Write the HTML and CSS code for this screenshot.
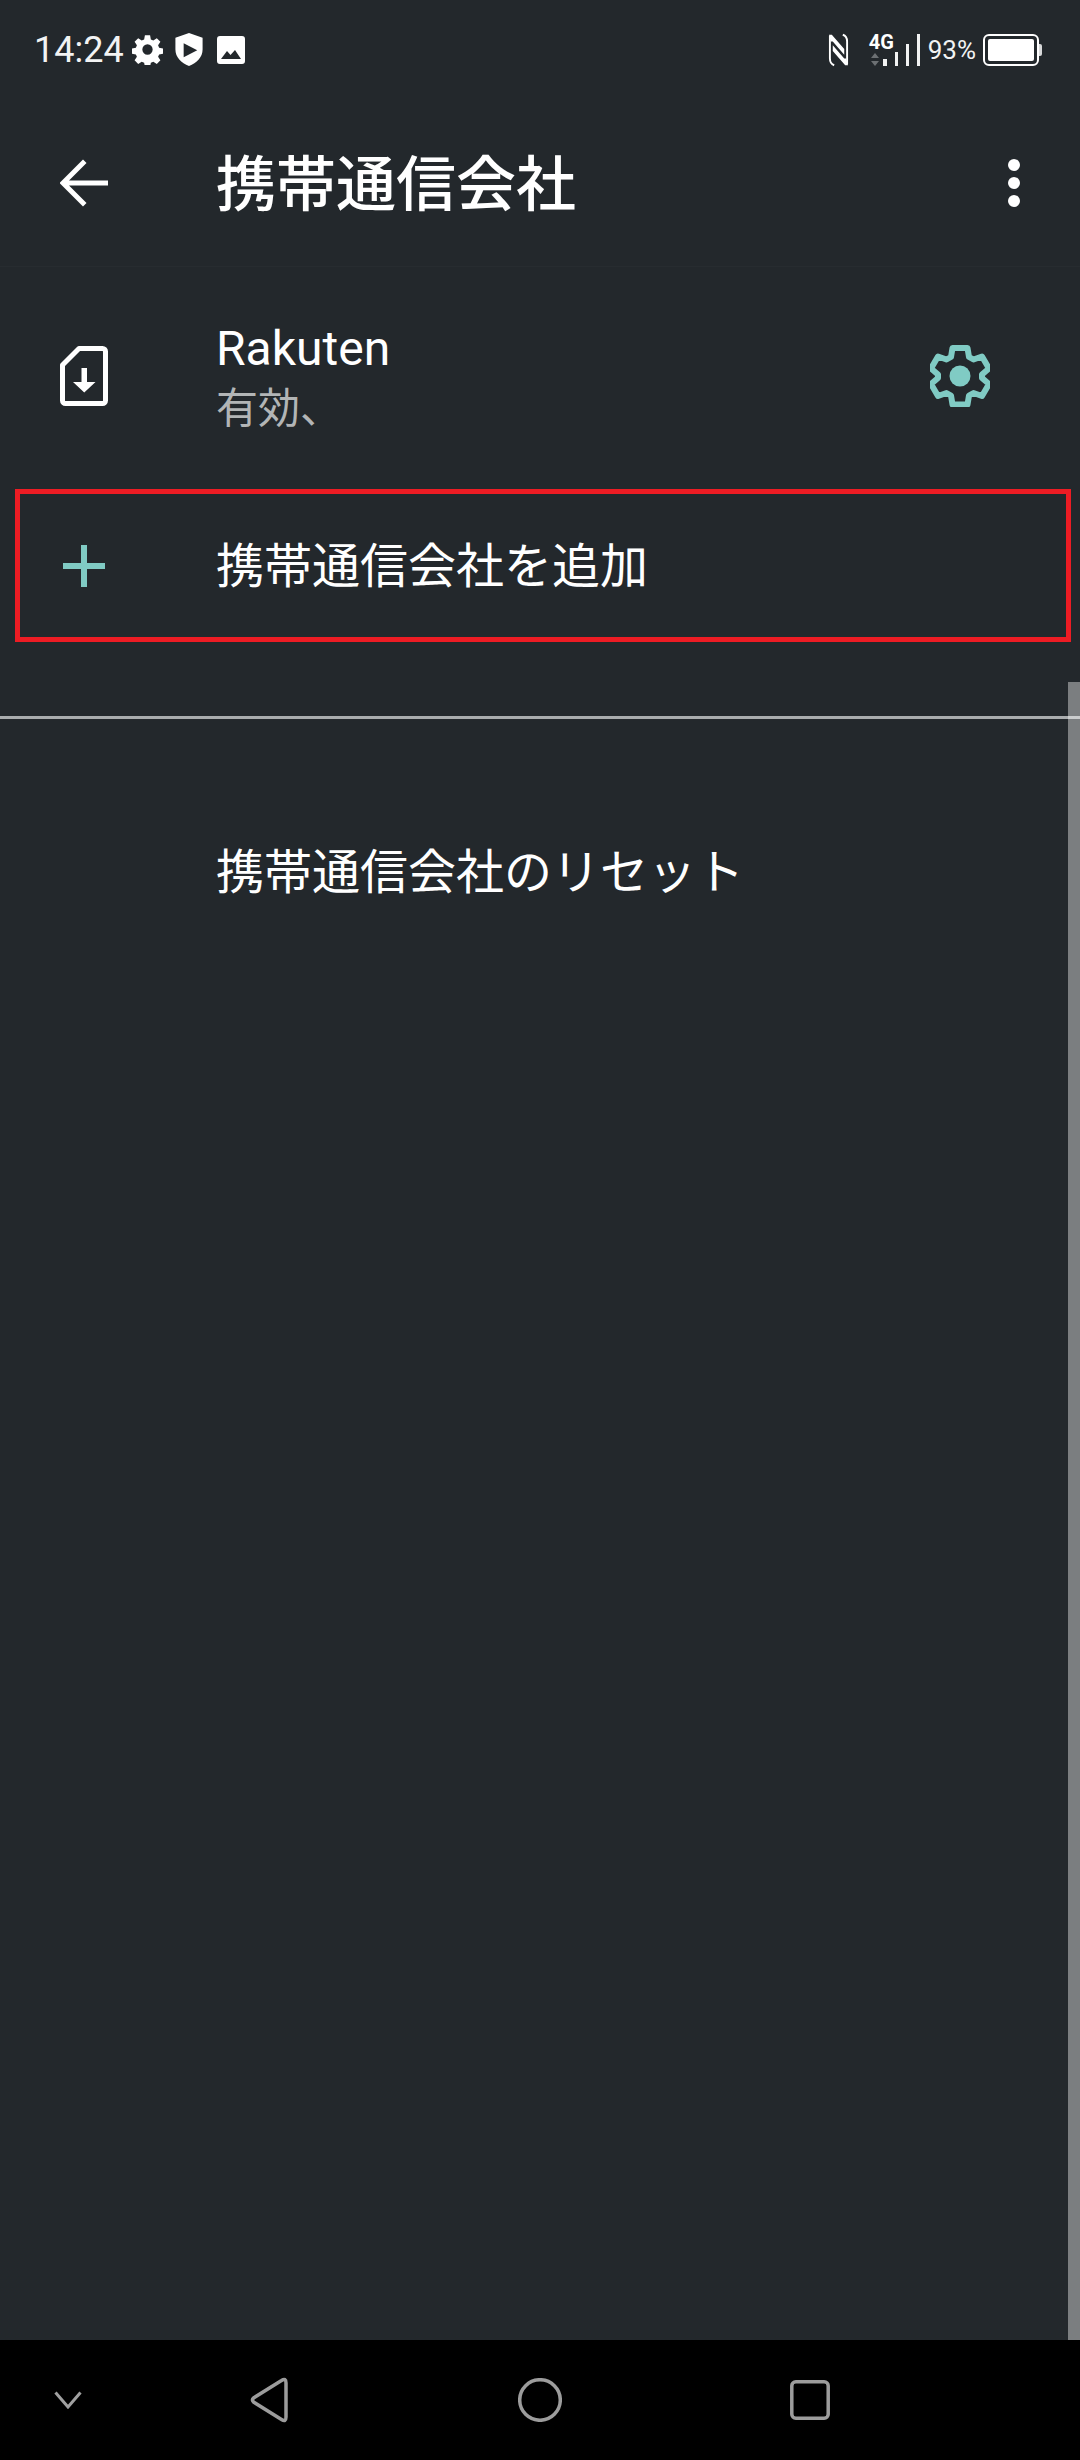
FILE: index.html
```html
<!DOCTYPE html>
<html lang="ja">
<head>
    <meta charset="UTF-8">
    <meta name="viewport" content="width=device-width, initial-scale=1.0">
    <title>携帯通信会社</title>
    <link rel="stylesheet" href="styles.css">
</head>
<body>
    <div class="screen">
        <div class="status-bar">
            <div class="status-left">
                <span class="time">14:24</span>
                <svg class="st-gear" viewBox="0 0 24 24"><path fill="#fff" fill-rule="evenodd" d="M10 1h4l.6 3.2 1.9.8 2.7-1.8 2.8 2.8-1.8 2.7.8 1.9 3 .6v4l-3 .6-.8 1.9 1.8 2.7-2.8 2.8-2.7-1.8-1.9.8-.6 3.2h-4l-.6-3.2-1.9-.8-2.7 1.8-2.8-2.8 1.8-2.7-.8-1.9-3-.6v-4l3-.6.8-1.9L2 6l2.800-2.800 2.700 1.800 1.900-.8zM12 8a4 4 0 1 0 0 8 4 4 0 0 0 0-8z"/></svg>
                <svg class="st-shield" viewBox="0 0 28 34"><path fill="#fff" fill-rule="evenodd" d="M14 0 28 5v12c0 8-6 14-14 17C6 31 0 25 0 17V5zM8.500 10.500v14.500l14-7.250z"/></svg>
                <svg class="st-image" viewBox="0 0 28 28"><path fill="#fff" fill-rule="evenodd" d="M3 0h22a3 3 0 0 1 3 3v22a3 3 0 0 1-3 3H3a3 3 0 0 1-3-3V3a3 3 0 0 1 3-3zM4 23h20l-6-9-4.500 5-3.500-4z"/></svg>
            </div>
            <div class="status-right">
                <svg class="st-nfc" viewBox="0 0 22 34"><path fill="none" stroke="#fff" stroke-width="2" d="M2 2V26c0 4 1.500 6 4.500 7"/><path fill="#fff" d="M1 1h3l13 15v6L5 8H3zM21 33h-3L5 18v-6l12 14h2z"/><path fill="none" stroke="#fff" stroke-width="2" d="M20 32V8c0-4-1.500-6-4.500-7"/></svg>
                <div class="net">
                    <span class="net-type">4G</span>
                    <svg class="net-arrows" viewBox="0 0 8 13"><path fill="#6c7073" d="M4 0 8 5H0zM0 8h8l-4 5z"/></svg>
                </div>
                <div class="signal">
                    <i class="bar bar1"></i><i class="bar bar2"></i><i class="bar bar3"></i><i class="bar bar4"></i>
                </div>
                <span class="battery-pct">93%</span>
                <div class="battery"><div class="battery-fill"></div></div>
                <div class="battery-tip"></div>
            </div>
        </div>

        <div class="app-bar">
            <svg class="icon-slot back" viewBox="0 0 48 48"><path fill="none" stroke="#fff" stroke-width="5" stroke-linecap="square" d="M47 24H5M23 4 3 24l20 20" stroke-linejoin="miter"/></svg>
            <h1 class="title">携帯通信会社</h1>
            <div class="overflow"><i></i><i></i><i></i></div>
        </div>

        <div class="list">
            <div class="row row-sim">
                <svg class="icon-slot" viewBox="0 0 48 60"><path fill="none" stroke="#fff" stroke-width="5" stroke-linejoin="round" d="M19 2.500h23.500a3 3 0 0 1 3 3v49a3 3 0 0 1-3 3h-37a3 3 0 0 1-3-3V19z"/><path fill="#fff" d="M21.500 22h5.500v14h8.500L24.250 46.500 13 36h8.500z"/></svg>
                <div class="sim-text">
                    <div class="sim-name">Rakuten</div>
                    <div class="sim-state">有効、</div>
                </div>
                <svg class="gear" viewBox="0 0 60 62"><g fill="none" stroke="#80cbc4" stroke-width="6" stroke-linejoin="round"><path d="M22.500 3h15l1.500 9 4.500 2.500 8.500-3 7 12-7 6v3.500l7 6-7 12-8.500-3-4.500 2.500-1.500 9h-15l-1.500-9-4.500-2.500-8.500 3-7-12 7-6v-3.500l-7-6 7-12 8.500 3 4.500-2.500z"/></g><circle cx="30" cy="31" r="10.500" fill="#80cbc4"/></svg>
            </div>
            <div class="row row-add">
                <svg class="icon-slot plus" viewBox="0 0 42 42"><path fill="#80cbc4" d="M18 0h6v18h18v6H24v18h-6V24H0v-6h18z"/></svg>
                <span class="row-label">携帯通信会社を追加</span>
            </div>
            <div class="divider"></div>
            <div class="row row-reset">
                <span class="row-label">携帯通信会社のリセット</span>
            </div>
        </div>

        <div class="scrollbar"></div>

        <div class="nav-bar">
            <svg class="nav-hide" viewBox="0 0 28 18"><path fill="none" stroke="#a0a0a0" stroke-width="3" d="M1.500 1.500 14 16 26.500 1.500"/></svg>
            <svg class="nav-back" viewBox="0 0 38 46"><path fill="none" stroke="#9c9c9c" stroke-width="3.500" stroke-linejoin="round" d="M31.500 3.500Q36 0.500 36 6V40Q36 45.500 31.500 42.500L3.500 25Q1.500 23 3.500 21Z"/></svg>
            <svg class="nav-home" viewBox="0 0 44 44"><circle cx="22" cy="22" r="20.300" fill="none" stroke="#9c9c9c" stroke-width="3.500"/></svg>
            <svg class="nav-recent" viewBox="0 0 40 40"><rect x="1.800" y="1.800" width="36.400" height="36.400" rx="4" fill="none" stroke="#9c9c9c" stroke-width="3.500"/></svg>
        </div>
    </div>
</body>
</html>
```

FILE: styles.css
```css
* {
    box-sizing: border-box;
}
html, body {
    margin: 0;
    padding: 0;
}
body {
    background: #23282c;
    font-family: "Noto Sans CJK JP", Roboto, sans-serif;
    color: #fff;
}
.screen {
    position: relative;
    width: 1080px;
    height: 2460px;
    display: flex;
    flex-direction: column;
    overflow: hidden;
}

/* status bar */
.status-bar {
    height: 99px;
    display: flex;
    justify-content: space-between;
    align-items: center;
    padding: 0 38px 0 34px;
}
.status-left, .status-right {
    display: flex;
    align-items: center;
}
.time {
    font-family: Roboto, sans-serif;
    font-size: 36px;
    line-height: 40px;
    color: #f2f3f3;
}
.st-gear {
    width: 31px;
    height: 31px;
    margin-left: 8px;
}
.st-shield {
    width: 28px;
    height: 33px;
    margin-left: 12px;
}
.st-image {
    width: 28px;
    height: 28px;
    margin-left: 14px;
}
.st-nfc {
    width: 21px;
    height: 34px;
}
.net {
    width: 28px;
    margin-left: 20px;
    display: flex;
    flex-direction: column;
    align-items: flex-start;
}
.net-type {
    font-family: Roboto, sans-serif;
    font-weight: 700;
    font-size: 20px;
    line-height: 16px;
}
.net-arrows {
    width: 8px;
    height: 13px;
    margin: 3px 0 0 2px;
}
.signal {
    display: flex;
    align-items: flex-end;
    gap: 8px;
    height: 32px;
    margin-left: -14px;
}
.bar {
    display: block;
    width: 3px;
    background: #f2f3f3;
}
.bar1 { height: 7px; width: 4px; }
.bar2 { height: 14px; }
.bar3 { height: 22px; }
.bar4 { height: 32px; }
.battery-pct {
    font-family: Roboto, sans-serif;
    font-size: 26px;
    line-height: 30px;
    margin-left: 8px;
    color: #f2f3f3;
}
.battery {
    width: 56px;
    height: 32px;
    margin-left: 7px;
    padding: 3px;
    border: 2px solid #fff;
    border-radius: 6px;
}
.battery-fill {
    width: 100%;
    height: 100%;
    background: #fff;
    border-radius: 2px;
}
.battery-tip {
    width: 3px;
    height: 12px;
    background: #d8d9da;
    border-radius: 0 2px 2px 0;
}

/* app bar */
.app-bar {
    height: 168px;
    display: flex;
    align-items: center;
    padding: 0 48px 0 60px;
    border-bottom: 1px solid #272c30;
}
.icon-slot {
    flex: none;
    width: 48px;
}
.back {
    height: 48px;
}
.title {
    flex: 1;
    margin: 0 0 0 108px;
    font-size: 60px;
    line-height: 72px;
    font-weight: 500;
    padding-bottom: 6px;
}
.overflow {
    width: 36px;
    display: flex;
    flex-direction: column;
    align-items: center;
    gap: 6px;
}
.overflow i {
    display: block;
    width: 12px;
    height: 12px;
    border-radius: 50%;
    background: #fff;
}

/* list */
.list {
    flex: 1;
    display: flex;
    flex-direction: column;
}
.row {
    display: flex;
    align-items: center;
}
.row-sim {
    height: 218px;
    padding: 0 90px 0 60px;
}
.row-sim .icon-slot {
    height: 60px;
}
.sim-text {
    flex: 1;
    margin-left: 108px;
    padding-top: 2px;
}
.sim-name {
    font-family: Roboto, sans-serif;
    font-size: 48px;
    line-height: 56px;
}
.sim-state {
    font-size: 42px;
    line-height: 56px;
    color: #b2b5b6;
}
.gear {
    flex: none;
    width: 60px;
    height: 62px;
}
.row-add {
    height: 153px;
    margin: 4px 9px 0 15px;
    padding: 0 0 8px 43px;
    border: 5px solid #ed1c24;
}
.plus {
    width: 42px;
    height: 42px;
    margin: 8px 111px 0 0;
}
.row-label {
    font-size: 48px;
    line-height: 66px;
}
.divider {
    height: 3px;
    margin-top: 74px;
    background: #a9acae;
}
.row-reset {
    padding: 116px 0 0 216px;
}
.scrollbar {
    position: absolute;
    top: 682px;
    right: 0;
    width: 12px;
    height: 1658px;
    background: rgba(255, 255, 255, 0.4);
}

/* nav bar */
.nav-bar {
    position: relative;
    height: 120px;
    background: #000;
    display: flex;
    align-items: center;
    padding-left: 54px;
}
.nav-hide {
    width: 28px;
    height: 18px;
}
.nav-back {
    width: 38px;
    height: 46px;
    margin-left: 168px;
}
.nav-home {
    width: 44px;
    height: 44px;
    margin-left: 230px;
}
.nav-recent {
    width: 40px;
    height: 40px;
    margin-left: 228px;
}
```
